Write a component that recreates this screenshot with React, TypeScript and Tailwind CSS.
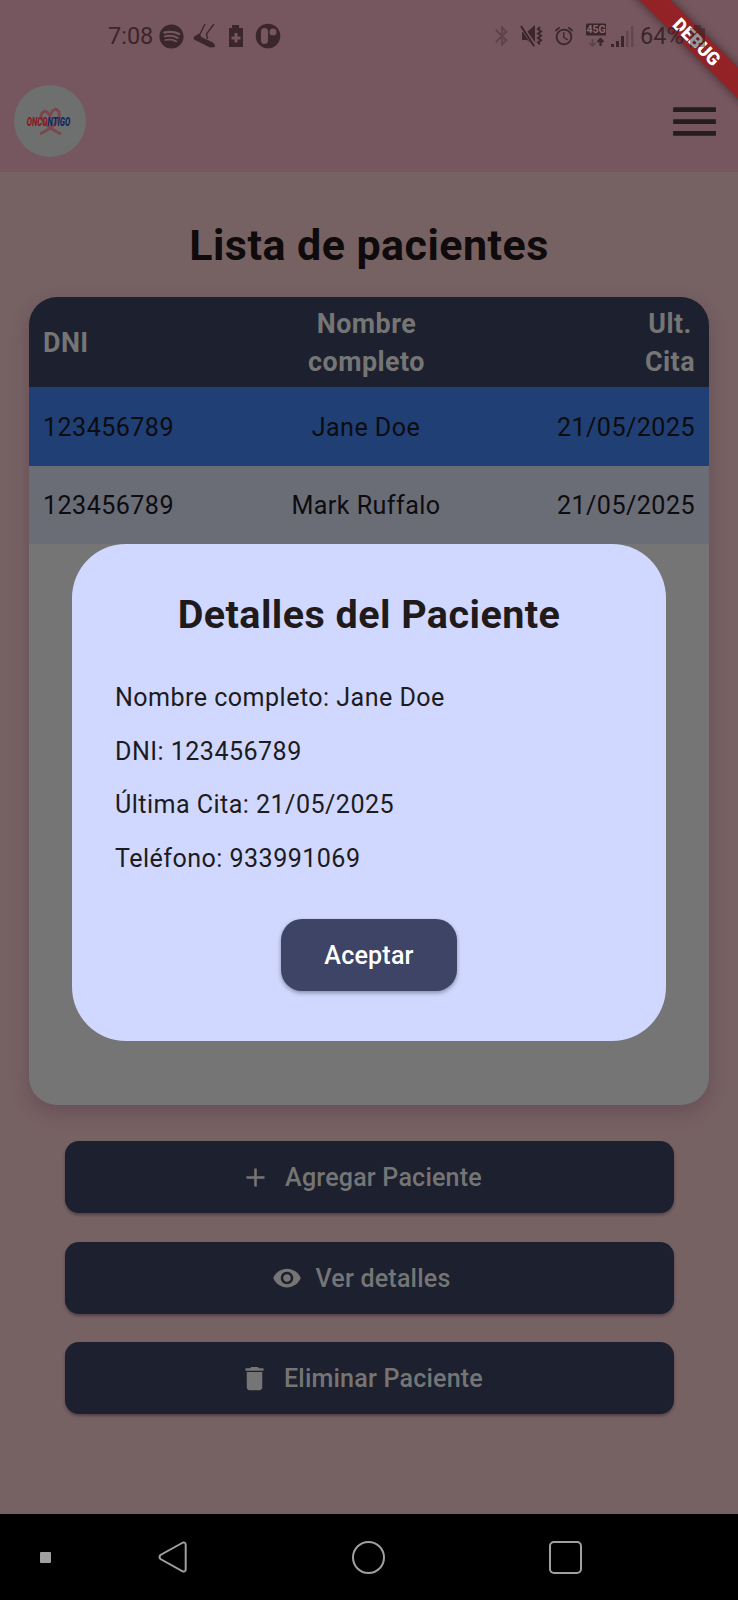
import React from "react";
import { FaSpotify } from "react-icons/fa";
import { MdAdd, MdVisibility, MdDelete, MdMenu, MdBluetooth, MdAlarm } from "react-icons/md";

function StatusBar() {
  return (
    <div className="relative z-10 flex h-[72px] items-center text-[#3a262b]">
      <span className="ml-[108px] w-[51px] pt-[2px] text-[23.500px]">7:08</span>
      <FaSpotify className="size-[25px] shrink-0" />
      <svg className="ml-[9px] h-[26px] w-[24px] shrink-0" viewBox="0 0 24 26">
        <path d="M0.500 14 L6 10.500 L9 14.500 L19 19 Q22 20.500 22 24 L17 24.500 L9 20.500 L1 16.500Z" fill="currentColor" />
        <path d="M6.500 12 L12 1 M14.500 16 L13.500 11 L21 1" stroke="currentColor" strokeWidth="1.300" fill="none" />
      </svg>
      <svg className="ml-[11px] h-[24px] w-[16px] shrink-0" viewBox="0 0 16 24">
        <path fillRule="evenodd" d="M4 1h7v3h4v19H1V4h3zM6.500 9v3.500H3.500v3h3v3h3v-3h3v-3h-3V9z" fill="currentColor" />
      </svg>
      <svg className="ml-[11px] size-[26px] shrink-0" viewBox="0 0 26 26">
        <circle cx="13" cy="13" r="12.300" fill="currentColor" />
        <rect x="6" y="5" width="7" height="16" rx="3.500" fill="#77575f" />
        <circle cx="18" cy="9" r="3.500" fill="#77575f" />
      </svg>
      <MdBluetooth className="ml-[209px] size-[24px] shrink-0 text-[#5d444a]" />
      <svg className="ml-[6px] h-[24px] w-[24px] shrink-0" viewBox="0 0 24 24">
        <path d="M2 8h5l8-7v22l-8-7H2z" fill="currentColor" />
        <path d="M1 2l14 20" stroke="#77575f" strokeWidth="4" />
        <path d="M1 2l13 20" stroke="currentColor" strokeWidth="2" />
        <path d="M20 3l-2 2.200 3 2.200-3 2.200 3 2.200-3 2.200 3 2.200-3 2.200 2 2" fill="none" stroke="currentColor" strokeWidth="2" />
      </svg>
      <MdAlarm className="ml-[9px] size-[22px] shrink-0" />
      <svg className="ml-[10px] h-[26px] w-[22px] shrink-0" viewBox="0 0 22 26">
        <rect x="1" y="0.500" width="20" height="12" rx="1" fill="currentColor" />
        <text x="11" y="10.300" textAnchor="middle" fontSize="10.500" fontWeight="700" fill="#8a6a72">45G</text>
        <path d="M7.500 16v7M4.500 20l3 3 3-3" fill="none" stroke="#5d444a" strokeWidth="1.800" />
        <path d="M15.500 23v-6M12.500 19l3-3 3 3" fill="none" stroke="currentColor" strokeWidth="2.200" />
      </svg>
      <svg className="ml-[4px] h-[24px] w-[23px] shrink-0" viewBox="0 0 23 24">
        <path d="M0 20h3v3H0zM5 17h3v6H5zM10 12h3v11h-3z" fill="currentColor" />
        <path d="M15 7h2.500v16H15zM20 2h2.500v21H20z" fill="#62474e" />
      </svg>
      <span className="ml-[6px] w-[43px] pt-[2px] text-[23.500px]">64%</span>
      <svg className="ml-[6px] h-[24px] w-[17px] shrink-0 opacity-45" viewBox="0 0 17 24">
        <path d="M5 1h7v3h4v19H1V4h4z" fill="#2a1a1e" />
        <circle cx="8" cy="14" r="4" fill="none" stroke="#0b1a18" strokeWidth="2.500" />
      </svg>
    </div>
  );
}

function Logo() {
  return (
    <svg className="size-[72px]" viewBox="0 0 72 72">
      <defs>
        <linearGradient id="wordmark">
          <stop offset="0.48" stopColor="#851c26" />
          <stop offset="0.48" stopColor="#112a5c" />
        </linearGradient>
      </defs>
      <circle cx="36" cy="36" r="36" fill="#6e706f" />
      <g fill="none" stroke="#7b474e" strokeWidth="2.800">
        <path d="M26 49 Q48 38 45 27 Q40 20 36 31 Q31 22 27 30 Q27 39 47 49" />
      </g>
      <text transform="translate(12.800 41) scale(0.580 1)" fontSize="13.500" fontWeight="900" fontStyle="italic" fill="url(#wordmark)">
        ONCONTIGO
      </text>
    </svg>
  );
}

function DebugBanner() {
  return (
    <svg className="absolute top-0 right-0 size-[120px]" viewBox="0 0 120 120">
      <defs>
        <filter id="soft" x="-20%" y="-150%" width="140%" height="400%">
          <feGaussianBlur stdDeviation="5" />
        </filter>
      </defs>
      <g transform="translate(78.500 41.500) rotate(45)">
        <rect x="-90" y="-11" width="180" height="22" fill="#000" opacity="0.5" filter="url(#soft)" />
        <rect x="-90" y="-10.800" width="180" height="21.600" fill="#932227" />
        <text x="0.500" y="6.500" textAnchor="middle" fontSize="18.300" fontWeight="900" fill="#fff">DEBUG</text>
      </g>
    </svg>
  );
}

const rows = [
  { dni: "123456789", name: "Jane Doe", date: "21/05/2025", tone: "bg-[#203f74]" },
  { dni: "123456789", name: "Mark Ruffalo", date: "21/05/2025", tone: "bg-[#6a6c76]" },
];

function PatientTable() {
  return (
    <div className="mx-[29px] h-[808px] overflow-hidden rounded-[28px] bg-[#757575] shadow-[0_7px_18px_rgba(70,40,60,0.3)]">
      <div className="grid h-[90px] grid-cols-3 items-center bg-[#1d202e] px-[14px] pt-[2px] text-[26.900px] leading-[38px] font-bold tracking-[0.450px] text-[#757575]">
        <span>DNI</span>
        <span className="mr-[5px] px-[40px] text-center">Nombre completo</span>
        <span className="-mr-[2px] ml-auto w-[54px] text-center">Ult. Cita</span>
      </div>
      {rows.map((r) => (
        <div key={r.name} className={"grid h-[78.500px] grid-cols-3 items-center px-[14px] pt-[3px] text-[25.100px] tracking-[0.450px] text-[#0d0c10] " + r.tone}>
          <span>{r.dni}</span>
          <span className="mr-[6px] text-center">{r.name}</span>
          <span className="text-right">{r.date}</span>
        </div>
      ))}
    </div>
  );
}

function ActionButton({ icon, label }: { icon: React.ReactNode; label: string }) {
  return (
    <button className="flex h-[72px] w-full items-center justify-center gap-[14px] rounded-[14px] bg-[#1d202e] pr-[16px] text-[25.100px] font-medium tracking-[0.180px] text-[#757575] shadow-[0_2px_3px_rgba(30,20,30,0.4)]">
      {icon}
      <span className="pt-[2px]">{label}</span>
    </button>
  );
}

function PatientDialog() {
  return (
    <div className="absolute top-[544px] left-[72px] z-20 flex h-[497px] w-[594px] flex-col rounded-[54px] bg-[#d0d8ff] px-[43px] text-[#1d1b20]">
      <h2 className="mt-[46px] h-[50px] text-center text-[39.500px] leading-[50px] font-bold tracking-[0.450px] text-[#201a1b]">Detalles del Paciente</h2>
      <div className="mt-[31px] text-[25.100px] leading-[53.700px] tracking-[0.450px]">
        <p>Nombre completo: Jane Doe</p>
        <p>DNI: 123456789</p>
        <p>Última Cita: 21/05/2025</p>
        <p>Teléfono: 933991069</p>
      </div>
      <button className="mx-auto mt-[33px] h-[72px] w-[176px] rounded-[21px] bg-[#3d4465] pt-[2px] text-[25.100px] font-medium tracking-[0.180px] text-white shadow-[0_2px_4px_rgba(0,0,0,0.35)]">Aceptar</button>
    </div>
  );
}

function NavBar() {
  return (
    <div className="flex h-[86px] items-center bg-black">
      <div className="ml-[40px] size-[11px] rounded-[1px] bg-[#a0a0a0]" />
      <svg className="ml-[106px] size-[34px]" viewBox="0 0 34 34" fill="none" stroke="#a0a0a0" strokeWidth="2">
        <path d="M26 2.500 L3.500 15 Q1.500 17 3.500 19 L26 31.500 Q28.700 32 28.700 29 V5 Q28.700 2 26 2.500Z" />
      </svg>
      <div className="ml-[161px] size-[33px] rounded-full border-2 border-[#a0a0a0]" />
      <div className="ml-[163.500px] size-[33px] rounded-[5px] border-2 border-[#a0a0a0]" />
    </div>
  );
}

export default function App() {
  return (
    <div className="relative flex h-[1600px] w-[738px] flex-col overflow-hidden bg-[#766163] font-['Roboto',sans-serif]">
      <header className="relative h-[172px] bg-[#77575f]">
        <DebugBanner />
        <StatusBar />
        <div className="flex h-[98px] items-center justify-between pr-[15px] pl-[14px]">
          <Logo />
          <MdMenu className="mt-px size-[57px] text-[#251d20]" />
        </div>
      </header>
      <main className="flex-1">
        <h1 className="mt-[43px] h-[82px] text-center text-[43px] leading-[60px] font-bold tracking-[0.450px] text-[#0f0b0c]">Lista de pacientes</h1>
        <PatientTable />
        <div className="mt-[36px] flex flex-col gap-[28.500px] px-[64.500px]">
          <ActionButton icon={<MdAdd className="size-[31px]" />} label="Agregar Paciente" />
          <ActionButton icon={<MdVisibility className="size-[30px]" />} label="Ver detalles" />
          <ActionButton icon={<MdDelete className="size-[31px]" />} label="Eliminar Paciente" />
        </div>
      </main>
      <NavBar />
      <PatientDialog />
    </div>
  );
}
